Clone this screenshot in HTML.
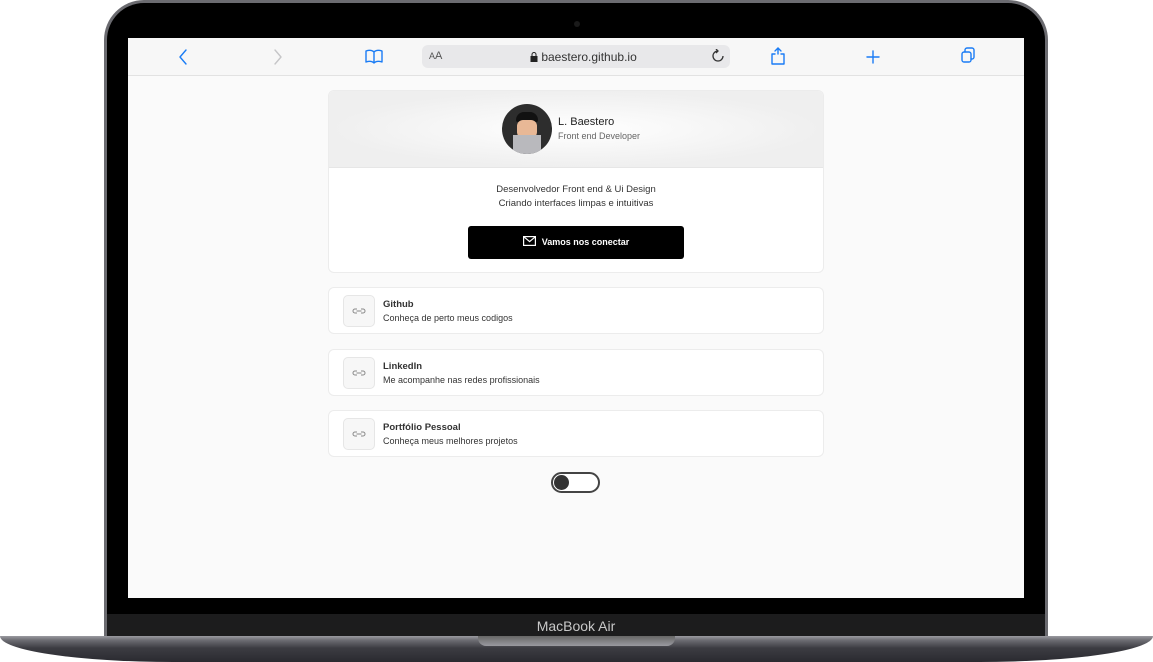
<!DOCTYPE html>
<html><head><meta charset="utf-8"><style>
*{margin:0;padding:0;box-sizing:border-box}
body{width:1153px;height:662px;background:#fff;position:relative;overflow:hidden;font-family:"Liberation Sans",sans-serif}
.lid{position:absolute;left:104px;top:0;width:944px;height:640px;background:#000;border-radius:40px 40px 0 0;border:3px solid #6b6b70;border-bottom:none}
.cam{position:absolute;left:574px;top:21px;width:6px;height:6px;border-radius:50%;background:#1a1a1a}
.chin{position:absolute;left:107px;top:614px;width:938px;height:24px;background:#1c1c1d}
.chin span{position:absolute;left:0;right:0;top:4px;text-align:center;color:#c8c8c8;font-size:14px}
.base{position:absolute;left:0;top:636px;width:1153px;height:26px;background:linear-gradient(#9a9aa0 0,#6e6e74 4px,#3c3c42 12px,#2a2a30);border-radius:0 0 200px 200px/0 0 30px 30px}
.notch{position:absolute;left:478px;top:636px;width:197px;height:10px;background:linear-gradient(#666,#9a9aa0);border-radius:0 0 8px 8px}
.screen{position:absolute;left:128px;top:38px;width:896px;height:560px;background:#fafafa}
.bar{position:absolute;left:0;top:0;width:896px;height:38px;background:#f7f7f7;border-bottom:1px solid #e2e2e2}
.url{position:absolute;left:294px;top:7px;width:308px;height:23px;background:#e8e8ea;border-radius:6px;font-size:12px;color:#333}
.card{position:absolute;left:200px;width:496px;background:#fff;border:1px solid #ececec;border-radius:6px}
.ico{position:absolute;left:14px;top:7px;width:32px;height:32px;border:1px solid #e6e6e6;border-radius:5px;background:#f7f7f7}
.t1{position:absolute;left:54px;top:11px;font-size:9.5px;font-weight:bold;color:#333}
.t2{position:absolute;left:54px;top:25px;font-size:9px;color:#333}
</style></head><body>
<div class="lid"></div><div class="cam"></div>
<div class="screen">
 <div class="bar">
  <svg width="896" height="38" style="position:absolute;left:0;top:0" fill="none" stroke="#1a7cf5" stroke-width="1.4" stroke-linecap="round" stroke-linejoin="round">
   <path d="M58 12l-6 7 6 7"/>
   <path d="M147 12l6 7-6 7" stroke="#c6c6c8"/>
   <path d="M238 13c3-1 6-1 8 1v11c-2-2-5-2-8-1zM246 14c2-2 5-2 8-1v11c-3-1-6-1-8 1"/>
   <path d="M650 16v-6m-3 3l3-3 3 3M647 16h-3v10h12V16h-3"/>
   <path d="M745 13v12M739 19h12"/>
   <rect x="834" y="14" width="9" height="10" rx="2"/><path d="M837 14v-2a2 2 0 012-2h5a2 2 0 012 2v7a2 2 0 01-2 2h-1"/>
  </svg>
  <div class="url"><span style="position:absolute;left:7px;top:5px;font-size:9px;color:#555">A<span style="font-size:11px">A</span></span>
   <span style="position:absolute;left:108px;top:5px"><svg width="8" height="10" style="vertical-align:-1px"><rect x="0.5" y="4" width="7" height="6" fill="#222"/><path d="M2 4V2.5a2 2 0 014 0V4" stroke="#222" fill="none"/></svg> baestero.github.io</span>
   <svg width="14" height="14" style="position:absolute;left:289px;top:4px" fill="none" stroke="#333" stroke-width="1.3"><path d="M7 2a5 5 0 105 5"/><path d="M5 0l2 2-2 2"/></svg>
  </div>
 </div>
 <div class="card" style="top:52px;height:183px;overflow:hidden">
  <div style="height:77px;background:radial-gradient(ellipse at center,#fff 0,#efefef 70%);border-bottom:1px solid #e6e6e6;position:relative">
   <div style="position:absolute;left:173px;top:13px;width:50px;height:50px;border-radius:50%;background:#2d2d2d;overflow:hidden">
    <div style="position:absolute;left:14px;top:8px;width:22px;height:10px;background:#111;border-radius:8px 8px 2px 2px"></div>
    <div style="position:absolute;left:15px;top:16px;width:20px;height:18px;background:#e8b896;border-radius:6px"></div>
    <div style="position:absolute;left:11px;top:31px;width:28px;height:20px;background:#b9b9bd"></div>
   </div>
   <div style="position:absolute;left:229px;top:25px;font-size:11px;color:#222">L. Baestero</div>
   <div style="position:absolute;left:229px;top:40px;font-size:9px;color:#666">Front end Developer</div>
  </div>
  <div style="text-align:center;font-size:9.5px;color:#333;line-height:14px;margin-top:15px">Desenvolvedor Front end &amp; Ui Design<br>Criando interfaces limpas e intuitivas</div>
  <div style="position:absolute;left:139px;top:135px;width:216px;height:33px;background:#000;border-radius:3px;color:#fff;font-size:9px;font-weight:bold;text-align:center;line-height:33px">
   <svg width="13" height="10" style="vertical-align:-1px;margin-right:6px" fill="none" stroke="#fff" stroke-width="1.2"><rect x=".6" y=".6" width="11.8" height="8.8"/><path d="M.6 .6l6 5 6-5"/></svg>Vamos nos conectar</div>
 </div>
 <div class="card" style="top:249px;height:47px"><div class="ico"><svg width="30" height="30" fill="none" stroke="#888" stroke-width="1"><path d="M13 13h-2a2 2 0 000 4h2M17 13h2a2 2 0 010 4h-2M12.5 15h5"/></svg></div><div class="t1">Github</div><div class="t2">Conheça de perto meus codigos</div></div>
 <div class="card" style="top:311px;height:47px"><div class="ico"><svg width="30" height="30" fill="none" stroke="#888" stroke-width="1"><path d="M13 13h-2a2 2 0 000 4h2M17 13h2a2 2 0 010 4h-2M12.5 15h5"/></svg></div><div class="t1">LinkedIn</div><div class="t2">Me acompanhe nas redes profissionais</div></div>
 <div class="card" style="top:372px;height:47px"><div class="ico"><svg width="30" height="30" fill="none" stroke="#888" stroke-width="1"><path d="M13 13h-2a2 2 0 000 4h2M17 13h2a2 2 0 010 4h-2M12.5 15h5"/></svg></div><div class="t1">Portfólio Pessoal</div><div class="t2">Conheça meus melhores projetos</div></div>
 <div style="position:absolute;left:423px;top:434px;width:49px;height:21px;border:2px solid #444;border-radius:11px;background:#fff"><div style="position:absolute;left:1px;top:1px;width:15px;height:15px;border-radius:50%;background:#333"></div></div>
</div>
<div class="chin"><span>MacBook Air</span></div>
<div class="base"></div><div class="notch"></div>
</body></html>
